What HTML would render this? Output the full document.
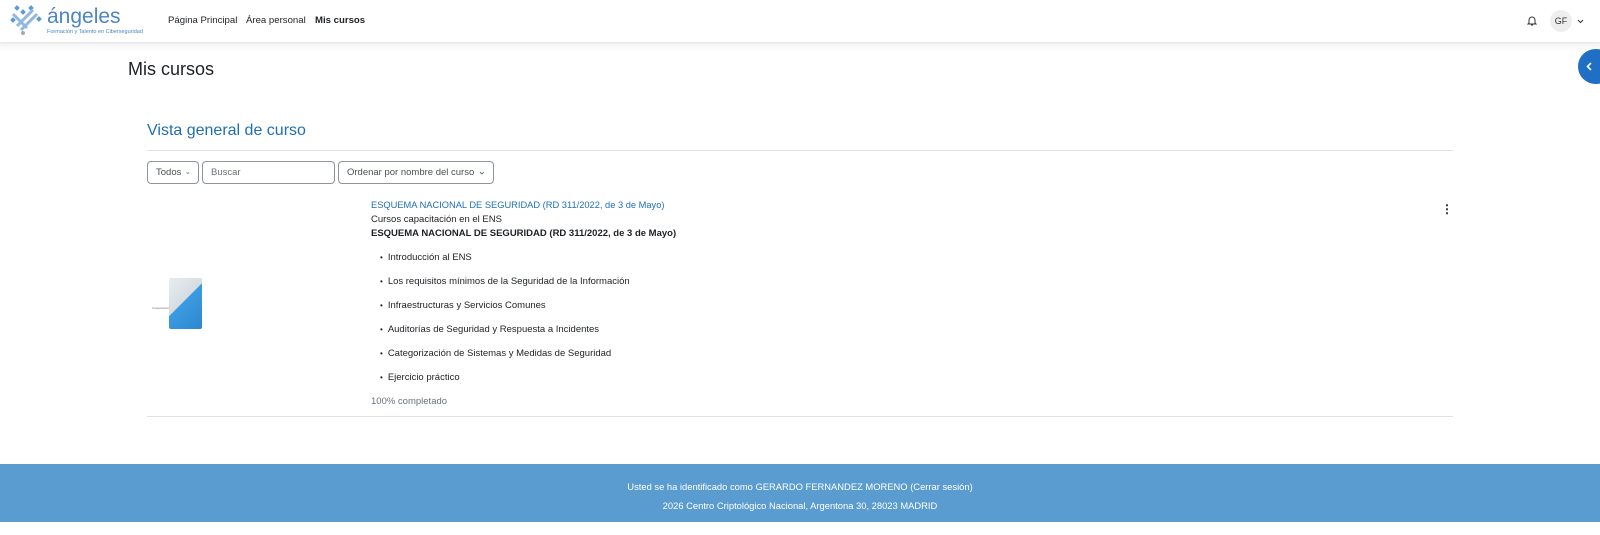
<!DOCTYPE html>
<html><head><meta charset="utf-8"><style>
*{box-sizing:border-box;margin:0;padding:0}
body{width:1600px;height:535px;background:#fff;font-family:"Liberation Sans",sans-serif;color:#1d2125;position:relative;overflow:hidden;font-size:10px}
.nav{position:absolute;left:0;top:0;width:1600px;height:42px;background:#fff;box-shadow:0 1px 3px rgba(0,0,0,.08)}
.abs{position:absolute;white-space:nowrap}
.band{position:absolute;top:42px;left:0;width:1600px;height:10px;background:linear-gradient(#f4f4f4,#fff)}
.btn{position:absolute;top:161px;height:23px;border:1px solid #8f959e;border-radius:4px;font-size:9.5px;color:#495057;padding:0 8px;display:flex;align-items:center;white-space:nowrap}
.btn svg{margin-left:5px}
.li{position:absolute;left:380px;font-size:9.5px}
.li:before{content:"•";margin-right:5px;font-size:8px}
</style></head><body>
<div class="band"></div>
<div class="nav">
<svg class="abs" style="left:9px;top:4px" width="36" height="32" viewBox="0 0 36 32">
<g fill="#5b9bd5"><rect x="6" y="2" width="4" height="4" transform="rotate(45 8 4)"/><rect x="12" y="6" width="4" height="4" transform="rotate(45 14 8)"/><rect x="20" y="2" width="4" height="4" transform="rotate(45 22 4)"/><rect x="28" y="13" width="4" height="4" transform="rotate(45 30 15)"/><rect x="2" y="14" width="4" height="4" transform="rotate(45 4 16)"/></g>
<path d="M8 22 L24 6 M12 26 L28 10 M4 10 L18 24" stroke="#8fb8e0" stroke-width="3"/>
<circle cx="14" cy="29" r="2" fill="#aaa"/>
</svg>
<div class="abs" style="left:47px;top:5px;font-size:21px;color:#4a86c5">ángeles</div>
<div class="abs" style="left:47px;top:29px;font-size:5.5px;color:#4a86c5">Formación y Talento en Ciberseguridad</div>
<div class="abs" style="left:168px;top:15px;font-size:9.6px">Página Principal</div>
<div class="abs" style="left:246px;top:15px;font-size:9.6px">Área personal</div>
<div class="abs" style="left:315px;top:15px;font-size:9.6px;font-weight:bold">Mis cursos</div>
<svg class="abs" style="left:1527px;top:15px" width="10" height="11" viewBox="0 0 10 11"><path d="M2 8V5a3 3 0 016 0v3l1 1H1z M4 10h2" fill="none" stroke="#333" stroke-width="1"/></svg>
<div class="abs" style="left:1550px;top:10px;width:22px;height:22px;border-radius:50%;background:#eee;font-size:9px;text-align:center;line-height:22px;color:#333">GF</div>
<svg class="abs" style="left:1577px;top:19px" width="7" height="5" viewBox="0 0 7 5"><path d="M1 1l2.5 2.5L6 1" fill="none" stroke="#333" stroke-width="1"/></svg>
</div>
<div class="abs" style="left:1578px;top:49px;width:36px;height:35px;border-radius:18px;background:#1f6fc5"></div>
<svg class="abs" style="left:1586px;top:62px" width="6" height="9" viewBox="0 0 6 9"><path d="M5 1L1.5 4.5 5 8" fill="none" stroke="#fff" stroke-width="1.6"/></svg>
<div class="abs" style="left:128px;top:59px;font-size:18px">Mis cursos</div>
<div class="abs" style="left:147px;top:122px;font-size:16px;color:#1f6fb5">Vista general de curso</div>
<div class="abs" style="left:147px;top:150px;width:1306px;height:1px;background:#dee2e6"></div>
<div class="btn" style="left:147px;width:52px">Todos<svg width="6" height="4" viewBox="0 0 6 4"><path d="M1 1l2 2 2-2" fill="none" stroke="#666"/></svg></div>
<div class="btn" style="left:202px;width:133px;color:#6a737b">Buscar</div>
<div class="btn" style="left:338px;width:156px">Ordenar por nombre del curso<svg width="6" height="4" viewBox="0 0 6 4"><path d="M1 1l2 2 2-2" fill="none" stroke="#666"/></svg></div>
<div class="abs" style="left:169px;top:278px;width:33px;height:51px;background:linear-gradient(135deg,#e8ecef 0,#d5dde3 45%,#3c9be0 46%,#2e86d0 100%);border-radius:2px"></div>
<div class="abs" style="left:152px;top:306px;font-size:3px;color:#777">Capacitación</div>
<div class="abs" style="left:371px;top:200px;font-size:9.3px;color:#1f6fb5">ESQUEMA NACIONAL DE SEGURIDAD (RD 311/2022, de 3 de Mayo)</div>
<div class="abs" style="left:371px;top:214px;font-size:9.5px">Cursos capacitación en el ENS</div>
<div class="abs" style="left:371px;top:228px;font-size:9.5px;font-weight:bold">ESQUEMA NACIONAL DE SEGURIDAD (RD 311/2022, de 3 de Mayo)</div>
<div class="abs" style="left:1441px;top:202px;font-size:12px;font-weight:bold">⋮</div>
<div class="li abs" style="top:252px">Introducción al ENS</div>
<div class="li abs" style="top:276px">Los requisitos mínimos de la Seguridad de la Información</div>
<div class="li abs" style="top:300px">Infraestructuras y Servicios Comunes</div>
<div class="li abs" style="top:324px">Auditorías de Seguridad y Respuesta a Incidentes</div>
<div class="li abs" style="top:348px">Categorización de Sistemas y Medidas de Seguridad</div>
<div class="li abs" style="top:372px">Ejercicio práctico</div>
<div class="abs" style="left:371px;top:396px;font-size:9.5px;color:#6a737b">100% completado</div>
<div class="abs" style="left:147px;top:416px;width:1306px;height:1px;background:#dee2e6"></div>
<div class="abs" style="left:0;top:464px;width:1600px;height:58px;background:#5a9bd0"></div>
<div class="abs" style="left:0;top:481px;width:1600px;text-align:center;color:#fff;font-size:9.4px">Usted se ha identificado como GERARDO FERNANDEZ MORENO (Cerrar sesión)</div>
<div class="abs" style="left:0;top:500px;width:1600px;text-align:center;color:#fff;font-size:9.4px">2026 Centro Criptológico Nacional, Argentona 30, 28023 MADRID</div>
</body></html>
